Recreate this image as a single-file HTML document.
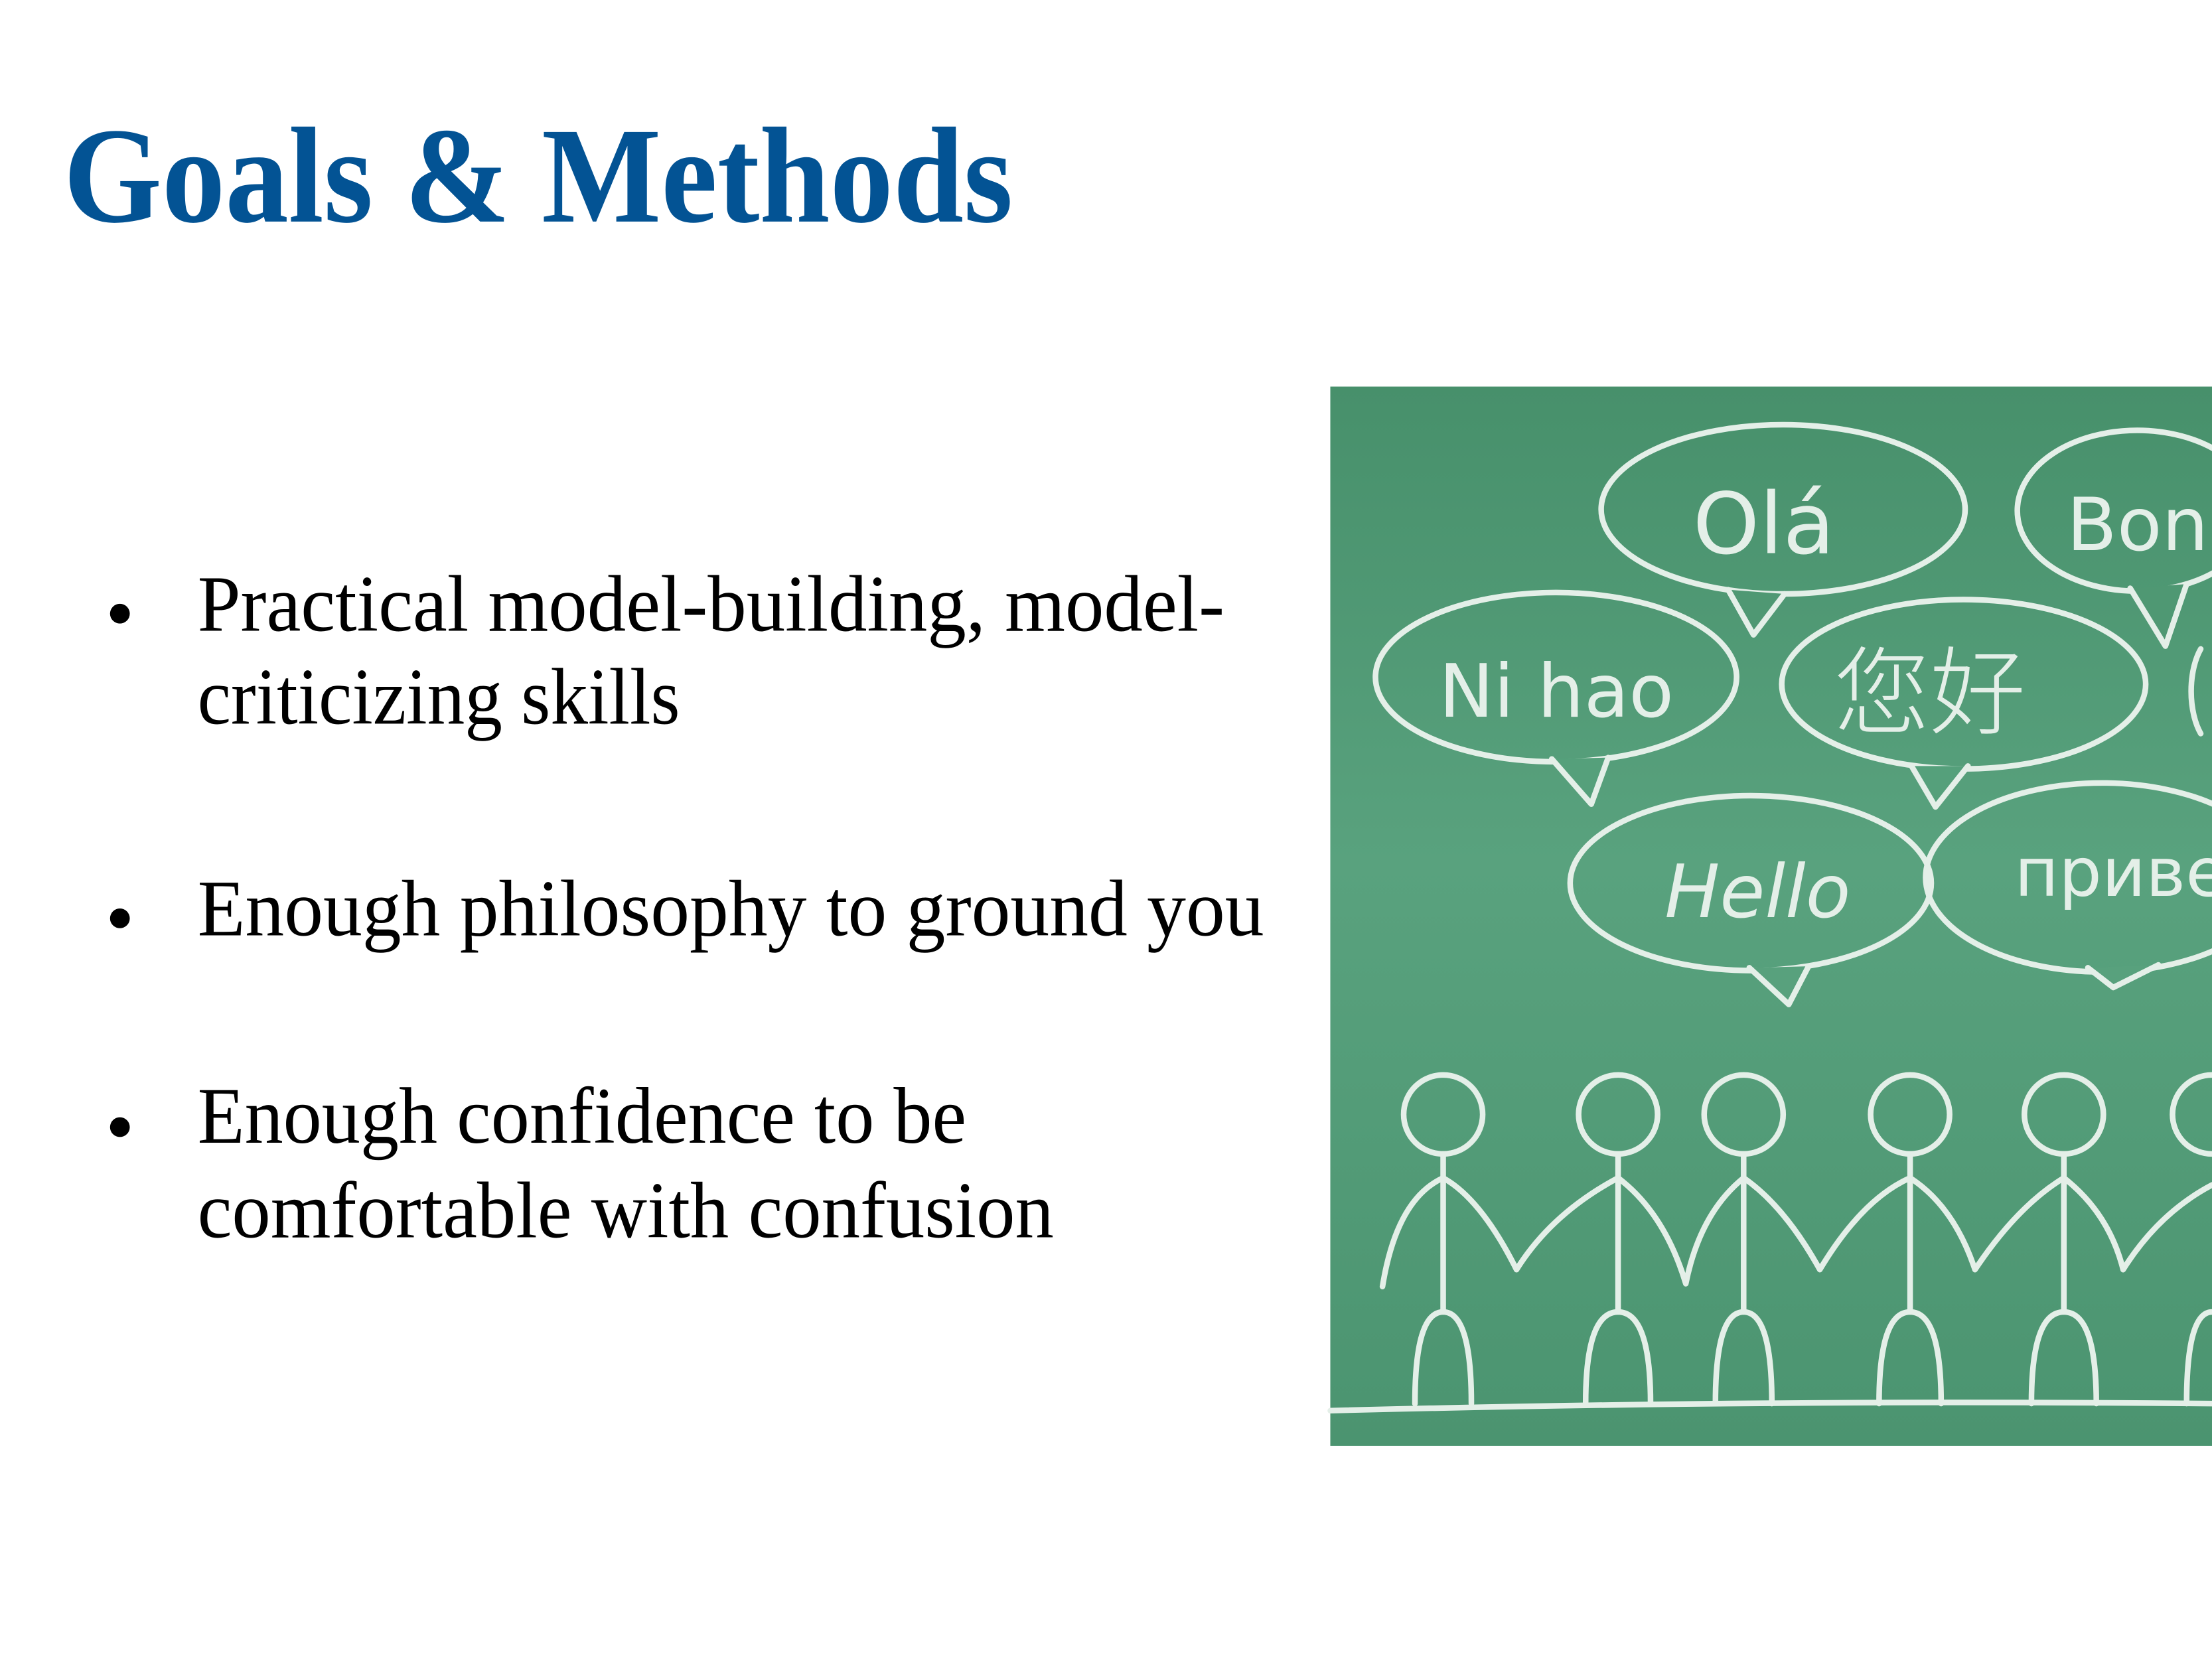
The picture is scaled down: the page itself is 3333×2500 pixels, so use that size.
<!DOCTYPE html>
<html><head><meta charset="utf-8"><style>
html,body{margin:0;padding:0;background:#fff;width:3333px;height:2500px;overflow:hidden}
svg{display:block}
</style></head><body>
<svg width="3333" height="2500" viewBox="0 0 1568 1176" xmlns="http://www.w3.org/2000/svg">
<defs>
<linearGradient id="g" x1="0" y1="0" x2="0" y2="1">
<stop offset="0" stop-color="#47906b"/>
<stop offset="0.45" stop-color="#59a27e"/>
<stop offset="1" stop-color="#4b9470"/>
</linearGradient>
</defs>
<rect width="1568" height="1176" fill="#fff"/>
<text x="45" y="157" font-family="Liberation Serif, serif" font-weight="bold" font-size="97" fill="#035394" textLength="673" lengthAdjust="spacingAndGlyphs">Goals &amp; Methods</text>
<g font-family="Liberation Serif, serif" font-size="57" fill="#000">
<circle cx="85" cy="435" r="7"/>
<circle cx="85" cy="651" r="7"/>
<circle cx="85" cy="799" r="7"/>
<text x="140" y="447" textLength="728" lengthAdjust="spacingAndGlyphs">Practical model-building, model-</text>
<text x="140" y="513" textLength="342" lengthAdjust="spacingAndGlyphs">criticizing skills</text>
<text x="140" y="663" textLength="756" lengthAdjust="spacingAndGlyphs">Enough philosophy to ground you</text>
<text x="140" y="810" textLength="545" lengthAdjust="spacingAndGlyphs">Enough confidence to be</text>
<text x="140" y="877" textLength="607" lengthAdjust="spacingAndGlyphs">comfortable with confusion</text>
</g>
<rect x="943" y="274" width="625" height="751" fill="url(#g)"/>
<g fill="none" stroke="#e4efe8" stroke-width="4" stroke-linecap="round" stroke-linejoin="round">
<ellipse cx="1264" cy="361" rx="129" ry="60"/>
<path d="M1225 418 L1243 450 L1265 421" fill="#4f9873" stroke-linejoin="round"/>
<ellipse cx="1515" cy="362" rx="85" ry="57"/>
<path d="M1510 417 L1535 458 L1550 414" fill="#4f9873"/>
<ellipse cx="1103" cy="480" rx="128" ry="60"/>
<path d="M1100 538 L1128 570 L1140 537" fill="#55a07b"/>
<ellipse cx="1392" cy="485" rx="129" ry="60"/>
<path d="M1355 543 L1372 572 L1395 543" fill="#55a07b"/>
<ellipse cx="1241" cy="626" rx="128" ry="62"/>
<path d="M1240 686 L1268 712 L1282 685" fill="#58a17d"/>
<ellipse cx="1490" cy="622" rx="125" ry="67"/>
<path d="M1480 686 L1498 700 L1530 684" fill="#58a17d"/>
<path d="M1560 460 A20 40 0 0 0 1560 520"/>
<circle cx="1023" cy="790" r="28"/><circle cx="1147" cy="790" r="28"/><circle cx="1236" cy="790" r="28"/>
<circle cx="1354" cy="790" r="28"/><circle cx="1463" cy="790" r="28"/><circle cx="1568" cy="790" r="28"/>
<path d="M1023 818 V930 M1147 818 V930 M1236 818 V930 M1354 818 V930 M1463 818 V930"/>
<path d="M980 912 Q990 850 1023 835 Q1050 850 1075 900 Q1100 860 1147 835 Q1180 860 1195 910 Q1205 860 1236 835 Q1265 855 1290 900 Q1320 850 1354 835 Q1385 855 1400 900 Q1430 855 1463 835 Q1495 860 1505 900 Q1530 860 1568 840"/>
<path d="M1003 995 Q1003 930 1023 930 Q1043 930 1043 995"/>
<path d="M1124 995 Q1124 930 1147 930 Q1170 930 1170 995"/>
<path d="M1216 995 Q1216 930 1236 930 Q1256 930 1256 995"/>
<path d="M1332 995 Q1332 930 1354 930 Q1376 930 1376 995"/>
<path d="M1440 995 Q1440 930 1463 930 Q1486 930 1486 995"/>
<path d="M1550 995 Q1550 930 1568 930"/>
<path d="M943 1000 Q1250 992 1568 995"/>
</g>
<g fill="#e4efe8" font-family="DejaVu Sans, sans-serif">
<text x="1200" y="392" font-size="60">Olá</text>
<text x="1465" y="390" font-size="52">Bon</text>
<text x="1020" y="508" font-size="52">Ni hao</text>
<text x="1300" y="515" font-family="Noto Sans CJK SC, sans-serif" font-size="68" font-weight="300">您好</text>
<text x="1180" y="650" font-size="52" font-style="italic">Hello</text>
<text x="1428" y="635" font-size="48">приве</text>
</g>
</svg>
</body></html>
